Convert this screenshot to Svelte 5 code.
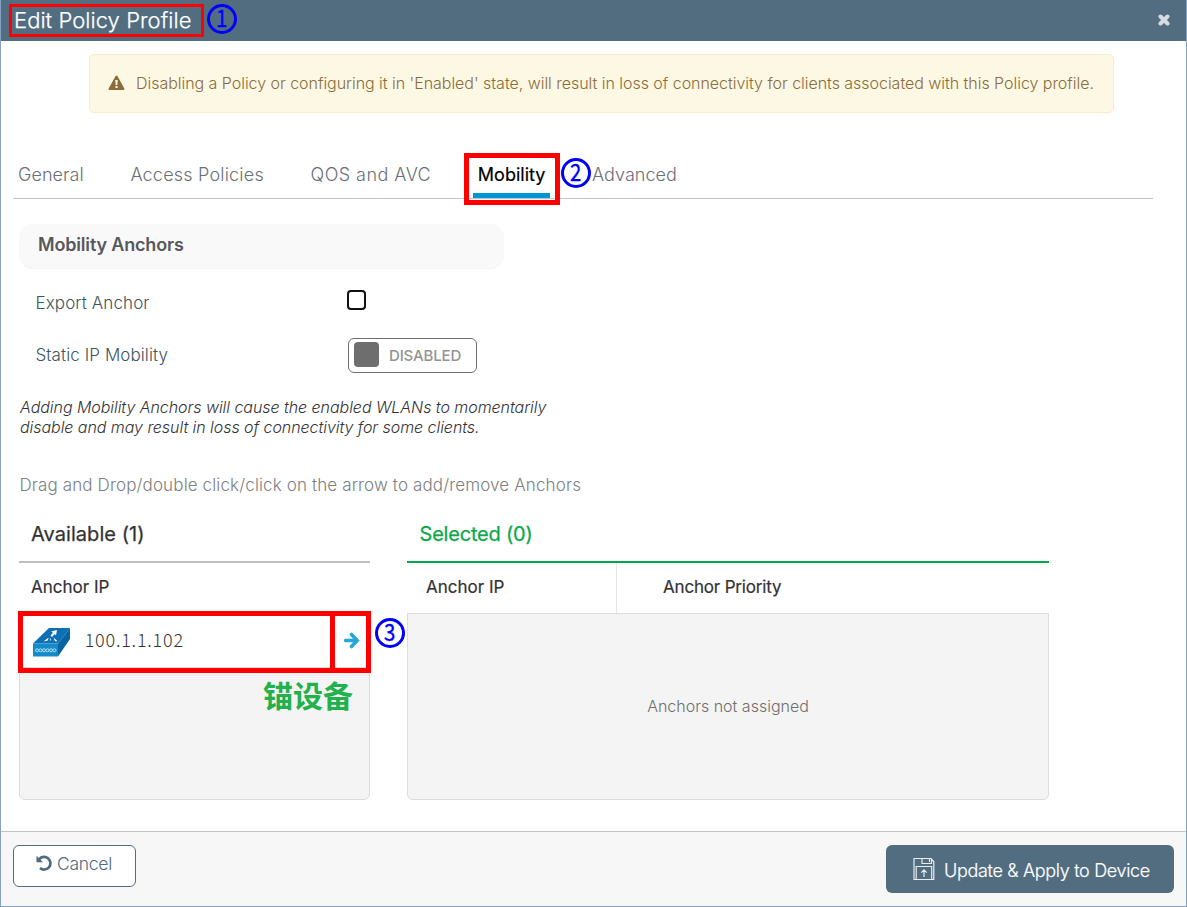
<script>
  const tabs = [
    { label: 'General', ls: '.04px' },
    { label: 'Access Policies', ls: '.2px' },
    { label: 'QOS and AVC', ls: '.45px' },
    { label: 'Mobility', ls: '0px', active: true },
    { label: 'Advanced', ls: '.03px' }
  ];
  const anchors = ['100.1.1.102'];
</script>

<div class="modal">
  <header>
    <h1>Edit Policy Profile</h1>
    <button class="close" aria-label="Close">
      <svg width="12" height="12" viewBox="0 0 12 12"><path d="M2.5 2.5 9.5 9.5M9.5 2.5 2.5 9.5" stroke="#d5dbe0" stroke-width="4" stroke-linecap="round" /></svg>
    </button>
  </header>

  <main>
    <div class="alert">
      <svg width="17" height="16" viewBox="0 0 17 16"><path d="M7.6 1 .7 13.4Q.2 15 1.7 15H15.3Q16.8 15 16.3 13.4L9.4 1Q8.5-.2 7.6 1Z" fill="#8a6d3b" /><path d="M7.3 4.9H9.7L9.4 9.9H7.6ZM7.4 11H9.6V13.1H7.4Z" fill="#fdf8e4" /></svg>
      <span>Disabling a Policy or configuring it in 'Enabled' state, will result in loss of connectivity for clients associated with this Policy profile.</span>
    </div>

    <nav>
      {#each tabs as tab}
        <button class="tab" class:active={tab.active} style="letter-spacing: {tab.ls}">{tab.label}</button>
      {/each}
    </nav>

    <h2>Mobility Anchors</h2>

    <div class="field export">
      <label for="export">Export Anchor</label>
      <span class="check" id="export"></span>
    </div>
    <div class="field static">
      <span class="label">Static IP Mobility</span>
      <span class="toggle"><i></i>DISABLED</span>
    </div>

    <p class="note">Adding Mobility Anchors will cause the enabled WLANs to momentarily<br />disable and may result in loss of connectivity for some clients.</p>
    <p class="hint">Drag and Drop/double click/click on the arrow to add/remove Anchors</p>

    <div class="lists">
      <section class="available">
        <h3>Available (1)</h3>
        <div class="cols"><span>Anchor IP</span></div>
        <div class="box">
          {#each anchors as ip}
            <div class="row">
              <svg class="device" width="38" height="29" viewBox="0 0 38 29">
                <path d="M0 15.5 16 0H37L25 15.5Z" fill="#0d70b4" />
                <path d="M25 15.5 37 0V11L25 28.5Z" fill="#0863a3" />
                <path d="M0 15.5H25V28.5H0Z" fill="#138ac9" />
                <path d="M18.2 8.2 21.5 4.8" stroke="#fff" stroke-width="2" />
                <path d="M18.2 3.6 24 2 23 7.2Z" fill="#fff" />
                <path d="M15.6 9.6 10.4 13.4 14.8 12.6ZM20.5 9.5 24.6 13.2 22 13.2Z" fill="#fff" />
                <path d="M17.4 10.5V12.6" stroke="#cfe6f3" stroke-width="1" />
                <g fill="none" stroke="#b8e0f3" stroke-width="1">
                  {#each [4, 7.5, 11, 14.5, 18, 21.5] as x}<circle cx={x} cy="22.3" r="1.5" />{/each}
                </g>
              </svg>
              <span class="ip">{ip}</span>
              <svg class="arrow" width="16" height="17" viewBox="0 0 16 17"><path d="M1.7 8.5H12M7.5 2.5 13.2 8.5 7.5 14.5" fill="none" stroke="#28a5d8" stroke-width="3.6" stroke-linecap="round" stroke-linejoin="miter" /></svg>
            </div>
          {/each}
        </div>
      </section>

      <section class="selected">
        <h3>Selected (0)</h3>
        <div class="cols"><span class="first">Anchor IP</span><span class="second">Anchor Priority</span></div>
        <div class="box empty">Anchors not assigned</div>
      </section>
    </div>
  </main>

  <footer>
    <button class="cancel">
      <svg width="17" height="17" viewBox="0 0 17 17"><path d="M3.3 4.2A6.3 6.3 0 1 1 4 13" fill="none" stroke="#4f6b7f" stroke-width="2.7" /><path d="M.5.8V7.2H7Z" fill="#4f6b7f" /></svg>
      <span>Cancel</span>
    </button>
    <button class="apply">
      <svg width="22" height="24" viewBox="0 0 22 24" fill="none" stroke="#e9edf0" stroke-width="1.2"><path d="M1 1.5H18L20.8 4.5V22.5H1ZM9 1.5V6.5H18.5V1.5M16.5 2V5M3.2 22.5V9.5H18.7V22.5M11 20V13M8.3 15.6 11 12.9 13.7 15.6" /></svg>
      <span>Update &amp; Apply to Device</span>
    </button>
  </footer>

  <div class="mark m1"></div>
  <div class="mark m2"></div>
  <div class="mark m3"></div>
  <div class="num n1"><b>1</b></div>
  <div class="num n2"><b>2</b></div>
  <div class="num n3"><b>3</b></div>
  <div class="caption">锚设备</div>
</div>

<style>
  :global(body) { background: #fff; }
  * { box-sizing: border-box; }
  .modal {
    position: relative;
    width: 1187px;
    height: 907px;
    display: flex;
    flex-direction: column;
    border: 1px solid #86a1bf;
    border-top: 0;
    background: #fff;
    font-family: Inter, sans-serif;
    font-weight: 300;
    overflow: hidden;
  }
  h1, h2, h3, p { margin: 0; }
  button { font: inherit; border: 0; background: none; padding: 0; }
  header {
    height: 41px;
    flex: none;
    margin: 0 -1px;
    padding: 0 17px 0 14px;
    background: #526d80;
    display: flex;
    align-items: center;
    justify-content: space-between;
  }
  h1 { font-size: 22px; font-weight: 300; color: #fff; line-height: 41px; height: 41px; letter-spacing: .05px; -webkit-text-stroke: .25px #fff; }
  .close { display: flex; margin-top: -2px; }
  main { height: 790px; flex: none; padding: 13px 0 0 12px; display: flex; flex-direction: column; }
  .alert {
    margin-left: 76px;
    width: 1025px;
    height: 59px;
    border: 1px solid #faebcc;
    border-radius: 5px;
    background: #fdf8e4;
    color: #8a6d3b;
    display: flex;
    align-items: center;
    gap: 11px;
    padding: 0 0 2px 18px;
    font-size: 16px;
    letter-spacing: -.034px;
    white-space: nowrap;
  }
  nav {
    margin-top: 36px;
    width: 1140px;
    height: 50px;
    border-bottom: 1px solid #c4c4c4;
    display: flex;
    align-items: flex-start;
    padding-left: 5px;
    gap: 46.7px;
  }
  .tab { height: 49px; line-height: 52px; font-size: 18px; color: #6b6f78; white-space: nowrap; }
  .tab.active {
    color: #000;
    font-weight: 400;
    -webkit-text-stroke: .2px #000;
    border-bottom: 5px solid #0096d6;
    padding: 0 5px;
    margin: 0 -5px;
  }
  h2 {
    margin: 25px 0 0 6px;
    width: 485px;
    height: 45px;
    border-radius: 14px;
    background: #f9f9f9;
    border-bottom: 1px solid #f3f3f3;
    padding-left: 19px;
    font-size: 18px;
    font-weight: 600;
    letter-spacing: -.17px;
    line-height: 41px;
    color: #58585b;
  }
  .field { display: flex; margin-left: 23px; font-size: 17px; letter-spacing: .09px; color: #3b5561; }
  .field label, .field .label { width: 312px; line-height: 34px; margin-left: -.5px; margin-right: .5px; }
  .export { margin-top: 17px; height: 52px; }
  .static { height: 35px; }
  .check { width: 19px; height: 20px; border: 2px solid #111; border-radius: 4px; margin: 4px 0 0 -1px; }
  .toggle {
    width: 129px;
    height: 35px;
    border: 1px solid #6e6e6e;
    border-radius: 6px;
    display: flex;
    align-items: center;
    gap: 10px;
    padding-left: 5px;
    font-size: 15px;
    font-weight: 500;
    letter-spacing: -.16px;
    color: #939393;
  }
  .toggle i { width: 25px; height: 25px; border-radius: 4px; background: #6e6e6e; margin-bottom: 3px; }
  .note {
    margin: 24px 0 0 7px;
    font-size: 16px;
    font-style: italic;
    line-height: 20px;
    letter-spacing: -.05px;
    color: #333;
  }
  .hint { margin: 37px 0 0 6.4px; font-size: 17px; line-height: 22px; letter-spacing: .13px; color: #7d7f83; }
  .lists { display: flex; gap: 37px; margin: 12px 0 0 6px; }
  .available { width: 351px; }
  .selected { width: 642px; }
  h3 {
    height: 56px;
    padding: 0 12px;
    font-size: 20px;
    font-weight: 400;
    -webkit-text-stroke: .25px currentColor;
    line-height: 54px;
    color: #333;
    border-bottom: 2px solid #bfbfbf;
    letter-spacing: .06px;
    margin-top: -1px;
  }
  .selected h3 { color: #0ba84a; border-color: #00a848; padding-left: 12.5px; letter-spacing: -.2px; }
  .cols { height: 50px; display: flex; font-size: 17px; font-weight: 400; -webkit-text-stroke: .2px currentColor; line-height: 48px; color: #333; padding-left: 12px; }
  .selected .cols { padding-left: 0; }
  .first { width: 210px; padding-left: 19px; border-right: 1px solid #e4e4e4; }
  .second { padding-left: 46px; letter-spacing: -.18px; }
  .box { height: 187px; background: #f4f4f4; border: 1px solid #dcdcdc; border-radius: 0 0 6px 6px; }
  .empty { display: flex; align-items: center; justify-content: center; font-size: 16px; color: #6f6f6f; padding-bottom: 2px; }
  .row {
    height: 54px;
    background: #fff;
    border-bottom: 1px solid #ddd;
    display: flex;
    align-items: center;
    padding: 0 9px 0 13px;
  }
  .device { margin-top: 3px; }
  .ip { flex: 1; margin: 0 0 4px 13.7px; font-family: "Noto Sans CJK SC", sans-serif; font-size: 18px; letter-spacing: .78px; color: #333; }
  footer {
    flex: 1;
    border-top: 1px solid #c4c4c4;
    background: #f7f7f7;
    display: flex;
    justify-content: space-between;
    align-items: flex-start;
    padding: 13px 12px 0;
  }
  .cancel {
    width: 123px;
    height: 42px;
    border: 1px solid #526d80;
    border-radius: 6px;
    background: #fff;
    color: #4f6b7f;
    font-size: 17.5px;
    letter-spacing: -.25px;
    display: flex;
    justify-content: center;
    align-items: center;
    gap: 4px;
    padding: 0 1px 5px 0;
  }
  .apply {
    width: 288px;
    height: 48px;
    border-radius: 6px;
    background: #526d80;
    color: #fff;
    font-size: 18px;
    font-weight: 300;
    letter-spacing: -.32px;
    display: flex;
    align-items: center;
    gap: 9px;
    padding-left: 27px;
  }
  .apply span { padding-top: 3px; -webkit-text-stroke: .2px #fff; }
  .mark { position: absolute; border: 5px solid #f00; }
  .m1 { left: 8px; top: 4px; width: 195px; height: 33px; border-width: 3px; }
  .m2 { left: 463px; top: 153px; width: 96px; height: 52px; }
  .m3 { left: 17px; top: 611px; width: 353px; height: 62px; }
  .m3::after { content: ""; position: absolute; right: 31px; top: 0; width: 5px; height: 52px; background: #f00; }
  .num {
    position: absolute;
    width: 30px;
    height: 30px;
    border: 3px solid #00f;
    border-radius: 50%;
    display: flex;
    align-items: center;
    justify-content: center;
    color: #00f;
    font-family: "Noto Sans CJK SC", sans-serif;
    font-size: 24px;
    line-height: 24px;
  }
  .num b { font-weight: 400; transform: scaleX(.85); margin-top: -4px; -webkit-text-stroke: .4px #00f; }
  .n1 { left: 206px; top: 4px; }
  .n2 { left: 560px; top: 158px; }
  .n3 { left: 374px; top: 618px; }
  .caption {
    position: absolute;
    left: 262px;
    top: 672px;
    font-family: "Noto Sans CJK SC", sans-serif;
    font-size: 30px;
    font-weight: 700;
    line-height: 44px;
    color: #22b14c;
  }
</style>
